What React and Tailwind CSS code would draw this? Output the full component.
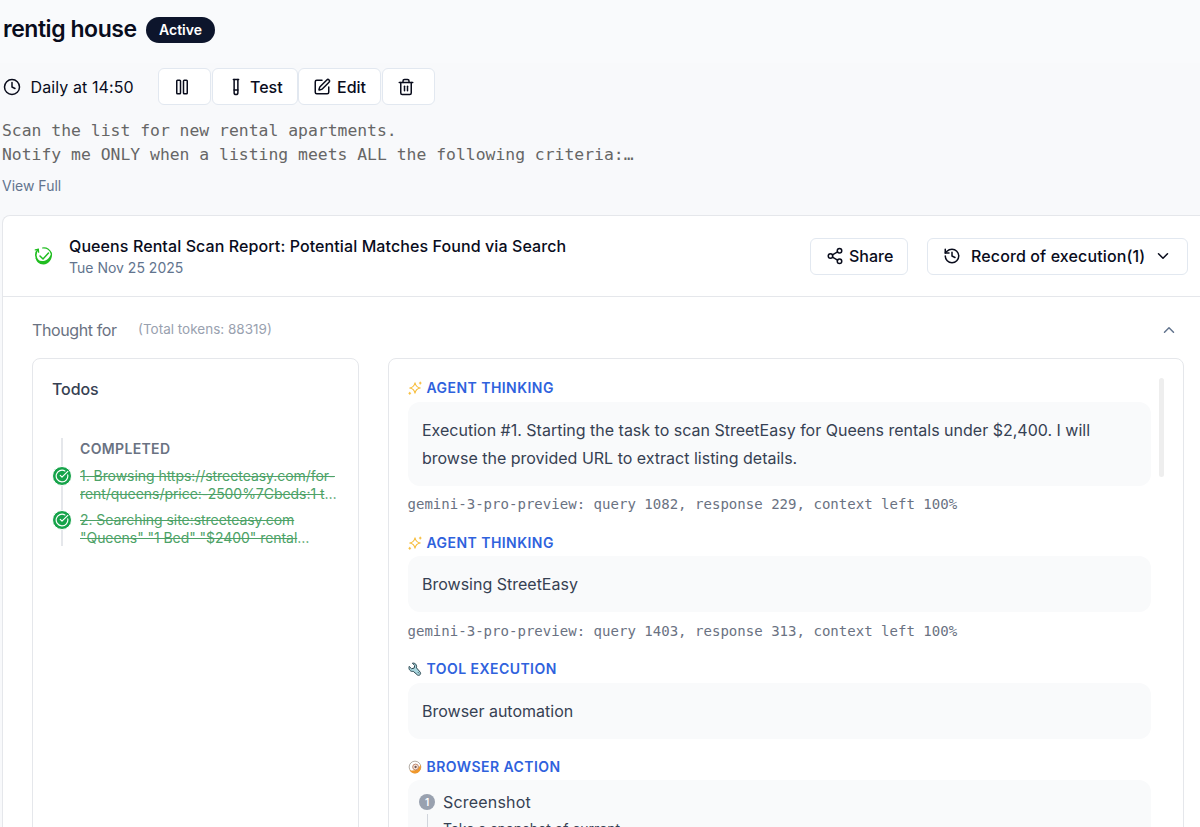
import {
  ChevronDown,
  ChevronUp,
  CircleCheckBig,
  Clock,
  History,
  Pause,
  Share2,
  SquarePen,
  TestTube,
  Trash2,
} from "lucide-react";

const todos = [
  ["1. Browsing https://streeteasy.com/for-", "rent/queens/price:-2500%7Cbeds:1 t"],
  ["2. Searching site:streeteasy.com", "\"Queens\" \"1 Bed\" \"$2400\" rental"],
];

function SparkleIcon() {
  return (
    <svg viewBox="0 0 24 24" className="size-3.5" fill="none" stroke="#f7bd3c" strokeWidth="1.900" strokeLinejoin="round" strokeLinecap="round">
      <path d="M12 3c1 5.500 3.500 8 9 9-5.500 1-8 3.500-9 9-1-5.500-3.500-8-9-9 5.500-1 8-3.500 9-9z" />
      <path d="M21 2v3M19.500 3.500h3M3 19.500v3M1.500 21h3" />
    </svg>
  );
}

function WrenchIcon() {
  return (
    <svg viewBox="0 0 24 24" className="size-3.5" fill="#a9d6de" stroke="#2b4650" strokeWidth="1.700" strokeLinejoin="round">
      <path d="M7.500 2l4 4-1 4.500-4.500 1-4-4c-1.500 5 2 9.500 7 8.500l7.500 6.500c3.500 1.500 6.500-2 4.500-5L14.500 10C16 5 12 1 7.500 2z" />
      <path d="M17.500 18l1 1" strokeLinecap="round" />
    </svg>
  );
}

function BrowserIcon() {
  return (
    <svg viewBox="0 0 24 24" className="size-3.5" fill="none">
      <circle cx="12" cy="12" r="10" fill="#fff" stroke="#a39a92" strokeWidth="1.400" />
      <path d="M21.500 8c2.500 7-2 15-9.500 15-4.500 0-7.500-2-9.500-5.500 8 2 15-1 19-9.500z" fill="#f0982a" />
      <circle cx="13" cy="12" r="5" fill="#f8e6d6" stroke="#b9826c" strokeWidth="1.600" />
      <circle cx="13" cy="12" r="2" fill="#6b555b" />
    </svg>
  );
}

function ReportIcon() {
  return (
    <svg viewBox="0 0 20 20" className="size-5" fill="none" stroke="#20bd20" strokeLinecap="round">
      <path d="M8.500 2c4.500-.7 8 2 8.800 6" strokeWidth="1.100" />
      <path d="M17.500 5.500c2 5-1.500 13-8 13-4.500 0-7.500-3-8-7C4 16.500 15.500 17.500 17.500 5.500z" fill="#20bd20" stroke="none" />
      <path d="M4 3.500C1 6.500 1 12 4.500 15" strokeWidth="1.600" />
      <path d="M1.300 3.800l3-.6.3 3" strokeWidth="1.300" />
      <path d="M6 10l3 3 5.500-6" strokeWidth="1.500" />
    </svg>
  );
}

function Step({ icon, title, children, usage, className = "" }) {
  return (
    <section className={className}>
      <div className="flex h-5 items-center gap-[5px] pt-px text-sm font-semibold tracking-[0.45px] text-[#2f62dd]">
        {icon}
        <h3>{title}</h3>
      </div>
      <div className="mt-1 rounded-xl bg-[#f9fafb] px-[14.500px] py-[14px] text-base leading-7 text-gray-700">
        {children}
      </div>
      {usage && <p className="mt-[8.500px] h-5 whitespace-pre font-['DejaVu_Sans_Mono',monospace] text-[14.050px] leading-5 text-gray-500">{usage}</p>}
    </section>
  );
}

export default function App() {
  const button = "flex h-[37px] items-center rounded-md border border-slate-200 bg-white text-base font-medium";

  return (
    <div className="h-[827px] overflow-hidden bg-[#f8f9fb] font-[Inter,sans-serif] text-[#090c1c]">
      <header className="flex h-[63px] items-center gap-2.5 bg-[#f9fafc] pb-1 pl-[3px]">
        <h1 className="w-[133px] whitespace-nowrap text-[23px] font-semibold tracking-[-0.450px]">rentig house</h1>
        <span className="flex h-[26px] w-[69px] items-center justify-center rounded-full bg-[#0d152c] text-sm font-semibold text-white">Active</span>
      </header>

      <div className="flex h-[47px] items-center">
        <Clock className="ml-[3px] size-[18px]" strokeWidth={2} />
        <span className="ml-[9.500px] w-[127.500px] text-base tracking-[0.100px]">Daily at 14:50</span>
        <div className="flex gap-px">
          <button className={`${button} w-[53px] pl-[14px]`}><Pause size={18} /></button>
          <button className={`${button} w-[86px] gap-[5px] pl-[14px]`}><TestTube size={18} />Test</button>
          <button className={`${button} -ml-px w-[83px] gap-[6px] pl-[14px]`}><SquarePen size={18} />Edit</button>
          <button className={`${button} w-[53px] pl-[14px]`}><Trash2 size={18} /></button>
        </div>
      </div>

      <div className="h-[105px] pl-[2px] pt-[9px]">
        <p className="whitespace-pre font-['DejaVu_Sans_Mono',monospace] text-[16.400px] leading-6 text-[#666]">{"Scan the list for new rental apartments.\nNotify me ONLY when a listing meets ALL the following criteria:…"}</p>
        <button className="mt-[9px] text-sm leading-5 text-slate-500">View Full</button>
      </div>

      <main className="ml-0.5 h-[640px] rounded-tl-lg border-l border-t border-gray-200 bg-white">
        <div className="flex h-[81px] items-center border-b border-gray-200 pl-[31px] pr-3">
          <ReportIcon />
          <div className="ml-[15px]">
            <h2 className="text-base leading-6 font-medium tracking-[0.095px]">Queens Rental Scan Report: Potential Matches Found via Search</h2>
            <p className="text-sm leading-5 text-slate-500">Tue Nov 25 2025</p>
          </div>
          <button className={`${button} ml-auto w-[98px] gap-[5px] pl-[15px]`}><Share2 size={18} />Share</button>
          <button className={`${button} ml-[19px] w-[261px] pl-[15px]`}>
            <History size={18} />
            <span className="ml-[10px] whitespace-nowrap tracking-[0.120px]">Record of execution(1)</span>
            <ChevronDown size={18} className="ml-[9px]" />
          </button>
        </div>

        <div className="flex h-[61px] items-center pl-[29px] pr-[22px] pt-1">
          <span className="text-base tracking-[-0.400px] text-gray-500">Thought for</span>
          <span className="ml-[21.500px] text-[13.500px] text-gray-400">(Total tokens: 88319)</span>
          <ChevronUp size={18} className="ml-auto text-slate-500" />
        </div>

        <div className="ml-[29px] flex h-[600px] gap-[28.500px]">
          <aside className="w-[327px] shrink-0 rounded-lg border border-gray-200 pl-[19px]">
            <h2 className="mt-[18px] text-base leading-6 font-medium tracking-[-0.100px] text-gray-700">Todos</h2>
            <div className="relative mt-[37px] pl-7 text-sm before:absolute before:left-[9px] before:top-0 before:h-[108px] before:w-0.5 before:bg-gray-200">
              <h3 className="h-[29px] pt-px font-semibold leading-5 tracking-[0.350px] text-gray-500">COMPLETED</h3>
              {todos.map(([first, second]) => (
                <div key={first} className="relative mb-[9px] h-[35px] whitespace-nowrap text-sm leading-[17.500px] tracking-[-0.050px] text-[#4da267]">
                  <span className="absolute -left-7 -top-px flex size-5 items-center justify-center rounded-full border border-white bg-[#16a34a] text-white">
                    <CircleCheckBig size={14} />
                  </span>
                  <span className="line-through">{first}</span><br />
                  <span className="line-through">{second}</span>…
                </div>
              ))}
            </div>
          </aside>

          <section className="relative w-[796px] shrink-0 rounded-lg border border-gray-200 px-[19px] pt-[18.500px]">
            <span className="absolute right-[19px] top-[19px] h-[99px] w-[5px] rounded-full bg-[#eee]" />
            <div className="w-[743px]">
              <Step icon={<SparkleIcon />} title="AGENT THINKING" usage="gemini-3-pro-preview: query 1082, response 229, context left 100%">
                Execution #1. Starting the task to scan StreetEasy for Queens rentals under $2,400. I will<br />
                browse the provided URL to extract listing details.
              </Step>
              <Step className="mt-[18px]" icon={<SparkleIcon />} title="AGENT THINKING" usage="gemini-3-pro-preview: query 1403, response 313, context left 100%">
                Browsing StreetEasy
              </Step>
              <Step className="mt-[18px]" icon={<WrenchIcon />} title="TOOL EXECUTION">Browser automation</Step>
              <Step className="mt-[17.500px]" icon={<BrowserIcon />} title="BROWSER ACTION">
                <div className="-ml-[3px] -mt-1.5 flex h-28 gap-2">
                  <div className="flex w-4 flex-col items-center pt-1.5">
                    <span className="flex size-4 items-center justify-center rounded-full bg-gray-400 text-[10px] font-semibold leading-4 text-white">1</span>
                    <span className="mt-1 h-20 w-px bg-gray-300" />
                  </div>
                  <div>
                    <div className="text-base leading-7 tracking-[0.200px]">Screenshot</div>
                    <div className="pt-px text-sm leading-6">Take a snapshot of current</div>
                  </div>
                </div>
              </Step>
            </div>
          </section>
        </div>
      </main>
    </div>
  );
}
